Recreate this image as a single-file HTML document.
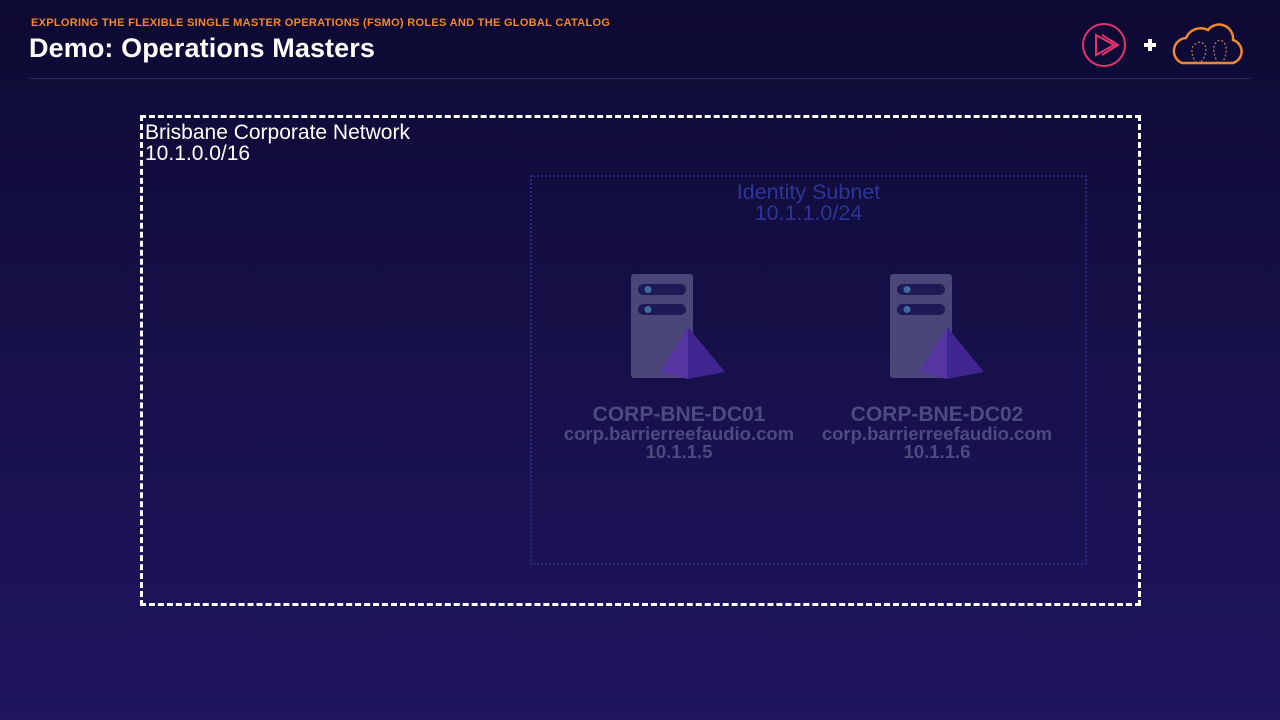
<!DOCTYPE html>
<html><head><meta charset="utf-8"><style>
*{margin:0;padding:0;box-sizing:border-box}
body{width:1280px;height:720px;overflow:hidden;position:relative;font-family:"Liberation Sans",sans-serif;background:linear-gradient(180deg,#0d0a33 0%,#150f45 40%,#1f1560 100%)}
.sub{position:absolute;left:31px;top:17px;font-size:11px;font-weight:bold;color:#f0872f;letter-spacing:.3px}
.title{position:absolute;left:29px;top:33px;font-size:27px;font-weight:bold;color:#fff;letter-spacing:.1px}
.hr{position:absolute;left:29px;right:29px;top:78px;height:1px;background:#2a2660}
.net{position:absolute;left:140px;top:115px;width:1001px;height:491px;border:3px dashed #fff}
.nl{position:absolute;left:145px;top:122px;color:#fff;font-size:21px;line-height:21px}
.subnet{position:absolute;left:530px;top:175px;width:557px;height:390px;border:2px dotted #2a2a80}
.st{position:absolute;left:530px;width:557px;text-align:center;color:#2c3596;font-size:21.5px;line-height:21px;top:182px}
.lab{position:absolute;width:260px;text-align:center;color:#4d4a80;font-weight:bold;line-height:18px}
.lab b{display:block;font-size:21px;line-height:20px}
.lab span{display:block;font-size:18.5px}
</style></head><body>
<div class="sub">EXPLORING THE FLEXIBLE SINGLE MASTER OPERATIONS (FSMO) ROLES AND THE GLOBAL CATALOG</div>
<div class="title">Demo: Operations Masters</div>
<div class="hr"></div>
<svg style="position:absolute;left:1078px;top:18px" width="180" height="56">
<circle cx="26" cy="27" r="21" fill="none" stroke="#e2336b" stroke-width="2"/>
<path d="M18 17 L36 27 L18 37 Z" fill="none" stroke="#e2336b" stroke-width="2"/>
<path d="M24 17 L40 27 L24 37" fill="none" stroke="#e2336b" stroke-width="2"/>
<path d="M72 21v12M66 27h12" stroke="#fff" stroke-width="4"/>
<path d="M104 45 H155 A12 12 0 0 0 155 22 A14 14 0 0 0 130 12 A16 16 0 0 0 108 20 A13 13 0 0 0 104 45 Z" fill="none" stroke="#f0872f" stroke-width="2.5"/>
<path d="M118 45 C112 35 112 26 122 24 C130 26 130 36 122 45 M140 45 C134 35 134 24 142 22 C150 24 150 36 144 45" fill="none" stroke="#c87a50" stroke-width="1.2" stroke-dasharray="2 2"/>
</svg>
<div class="net"></div>
<div class="nl">Brisbane Corporate Network<br>10.1.0.0/16</div>
<div class="subnet"></div>
<div class="st">Identity Subnet<br>10.1.1.0/24</div>
<svg style="position:absolute;left:628px;top:272px" width="100" height="110"><rect x="3" y="2" width="62" height="104" rx="3" fill="#4a4677"/><rect x="10" y="12" width="48" height="11" rx="5.5" fill="#1e1a55"/><rect x="10" y="32" width="48" height="11" rx="5.5" fill="#1e1a55"/><circle cx="20" cy="17.5" r="3.5" fill="#3e6aa0"/><circle cx="20" cy="37.5" r="3.5" fill="#3e6aa0"/><path d="M60 55 L32 100 L60 107 Z" fill="#55359f"/><path d="M60 55 L97 100 L60 107 Z" fill="#3f2590"/></svg>
<svg style="position:absolute;left:887px;top:272px" width="100" height="110"><rect x="3" y="2" width="62" height="104" rx="3" fill="#4a4677"/><rect x="10" y="12" width="48" height="11" rx="5.5" fill="#1e1a55"/><rect x="10" y="32" width="48" height="11" rx="5.5" fill="#1e1a55"/><circle cx="20" cy="17.5" r="3.5" fill="#3e6aa0"/><circle cx="20" cy="37.5" r="3.5" fill="#3e6aa0"/><path d="M60 55 L32 100 L60 107 Z" fill="#55359f"/><path d="M60 55 L97 100 L60 107 Z" fill="#3f2590"/></svg>
<div class="lab" style="left:549px;top:405px"><b>CORP-BNE-DC01</b><span>corp.barrierreefaudio.com</span><span>10.1.1.5</span></div>
<div class="lab" style="left:807px;top:405px"><b>CORP-BNE-DC02</b><span>corp.barrierreefaudio.com</span><span>10.1.1.6</span></div>
</body></html>
